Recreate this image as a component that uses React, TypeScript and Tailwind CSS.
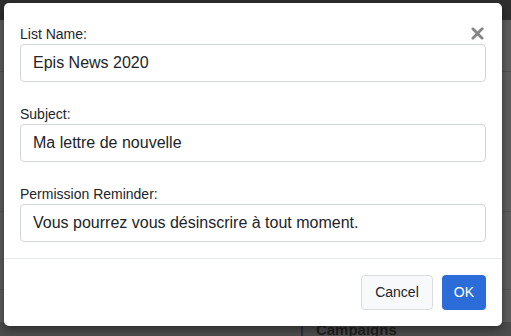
import React from 'react';

const fields = [
  { label: 'List Name:', value: 'Epis News 2020' },
  { label: 'Subject:', value: 'Ma lettre de nouvelle' },
  { label: 'Permission Reminder:', value: 'Vous pourrez vous désinscrire à tout moment.' },
];

export default function App() {
  return (
    <div
      className="relative w-[511px] h-[336px] overflow-hidden bg-[#5e5e5e] text-[#212529]"
      style={{ fontFamily: '"Liberation Sans", Arial, sans-serif' }}
    >
      {/* Page behind the overlay */}
      <div className="flex flex-col h-full">
        <div className="h-[20px] bg-[#2f2f2f]" />
        <div className="h-[52px] border-b border-[#4f4f4f]" />
        <div className="h-[140px] border-b border-[#535353]" />
        <div className="h-[78px] border-b border-[#535353]" />
        <div className="grow" />
        <div className="h-[14px] bg-[#4c4c4c] flex items-end pl-[300px] leading-none">
          <span className="text-[15px] font-bold text-[#1f1f1f] translate-y-[1px]">
            <span className="mr-3 font-normal">|</span>Campaigns
          </span>
        </div>
      </div>

      {/* Modal */}
      <div className="absolute left-[4px] top-[3px] w-[498px] h-[323px] rounded-[5px] bg-white shadow-[0_3px_10px_rgba(0,0,0,0.45)]">
        <button className="absolute right-[18px] top-[24px] w-[13px] h-[13px] text-[#858585]">
          <svg viewBox="0 0 14 14" width="13" height="13">
            <path d="M2 2L12 12M12 2L2 12" stroke="currentColor" strokeWidth="3" strokeLinecap="round" />
          </svg>
        </button>

        <div className="px-4 pt-[21px] flex flex-col gap-[22px]">
          {fields.map((f) => (
            <div key={f.label} className="flex flex-col">
              <label className="text-[14px] leading-[20px]">{f.label}</label>
              <div className="h-[38px] rounded-[4px] border border-[#d3d6da] px-[12px] flex items-center text-[16px]">
                {f.value}
              </div>
            </div>
          ))}
        </div>

        <div className="mt-[16px] border-t border-[#e9ecef] px-4 pt-[16px] flex justify-end gap-[9px]">
          <button className="h-[35px] px-[13px] rounded-[4px] border border-[#dadcdf] bg-[#f8f9fa] text-[14px] text-[#212529]">
            Cancel
          </button>
          <button className="h-[35px] px-[12px] rounded-[4px] bg-[#2b6cd8] text-[14px] text-white">
            OK
          </button>
        </div>
      </div>
    </div>
  );
}
